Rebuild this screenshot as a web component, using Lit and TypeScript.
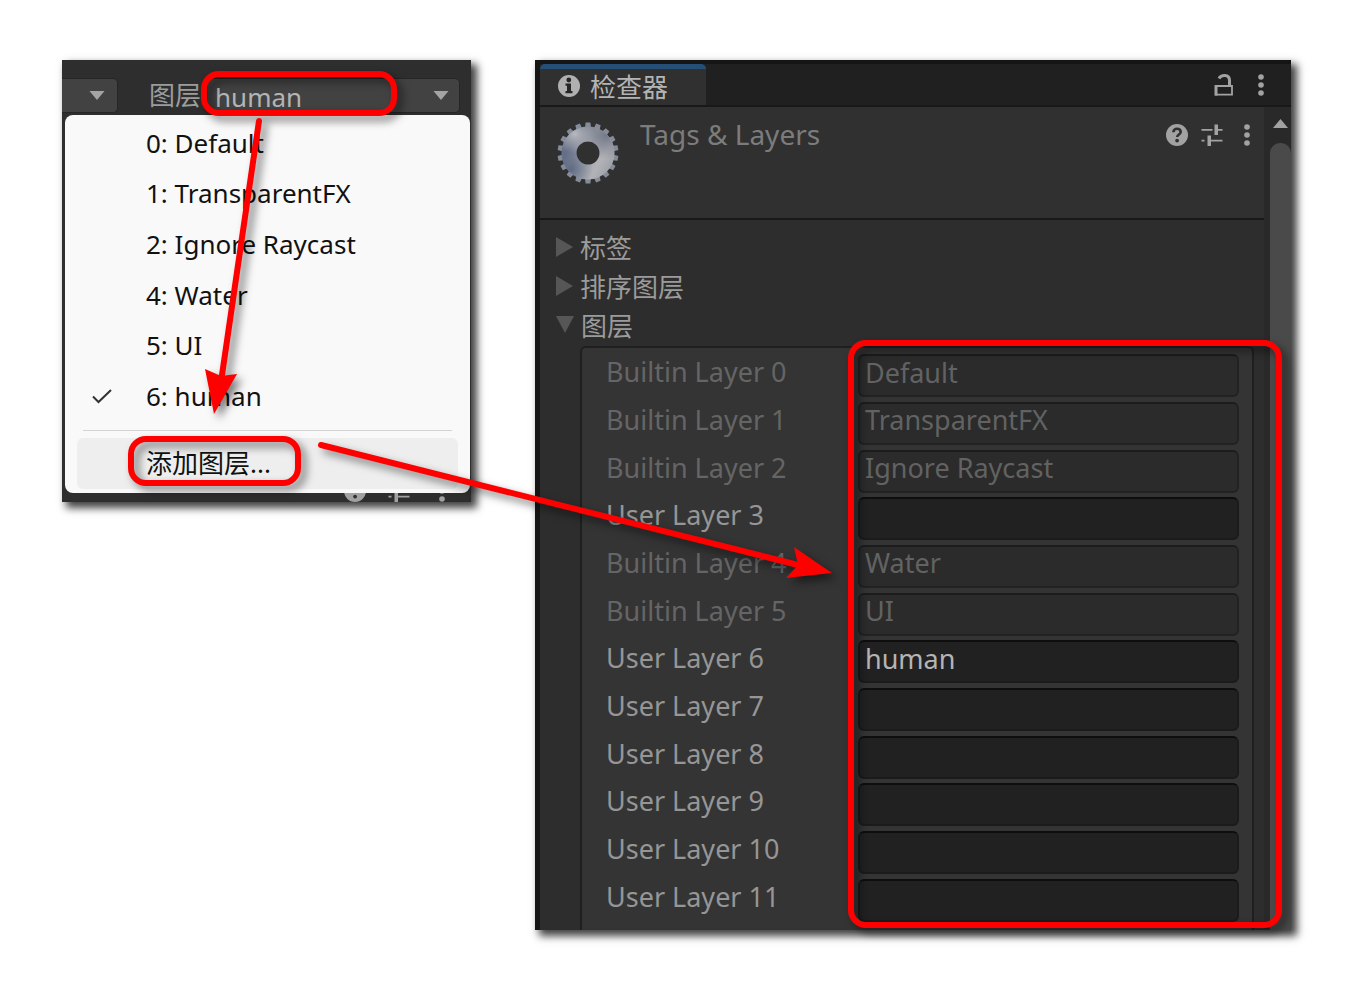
import { LitElement, html, css, svg } from "lit";
import { customElement } from "lit/decorators.js";

const MENU = ["0: Default", "1: TransparentFX", "2: Ignore Raycast", "4: Water", "5: UI", "6: human"];

const LAYERS = [
  { label: "Builtin Layer 0", value: "Default", builtin: true },
  { label: "Builtin Layer 1", value: "TransparentFX", builtin: true },
  { label: "Builtin Layer 2", value: "Ignore Raycast", builtin: true },
  { label: "User Layer 3", value: "", builtin: false },
  { label: "Builtin Layer 4", value: "Water", builtin: true },
  { label: "Builtin Layer 5", value: "UI", builtin: true },
  { label: "User Layer 6", value: "human", builtin: false },
  { label: "User Layer 7", value: "", builtin: false },
  { label: "User Layer 8", value: "", builtin: false },
  { label: "User Layer 9", value: "", builtin: false },
  { label: "User Layer 10", value: "", builtin: false },
  { label: "User Layer 11", value: "", builtin: false },
];

const helpIcon = html`<svg width="22" height="22" viewBox="0 0 22 22" aria-hidden="true">
  <circle cx="11" cy="11" r="11" fill="#a2a2a2" />
  <path d="M7.400 8.200C7.400 6 9 4.800 11 4.800S14.700 6 14.700 8c0 2.400-3.500 2.600-3.500 5" fill="none" stroke="#303030" stroke-width="2.600" />
  <circle cx="11.100" cy="16.600" r="1.900" fill="#303030" />
</svg>`;

const slidersIcon = html`<svg width="22" height="22" viewBox="0 0 22 22" aria-hidden="true" fill="#a2a2a2">
  <path d="M0.500 5h11v1.800h-11zM17 5h4.500v1.800H17zM13.500 0.500h3.500v10.500h-3.500zM0.500 15.700h3v1.800h-3zM10 15.700h11.500v1.800H10zM6.500 11.500H10v10.500H6.500z" />
</svg>`;

const dotsIcon = html`<svg width="6" height="22" viewBox="0 0 6 22" aria-hidden="true" fill="#a2a2a2">
  <circle cx="3" cy="3" r="2.800" /><circle cx="3" cy="11" r="2.800" /><circle cx="3" cy="19" r="2.800" />
</svg>`;

const lockIcon = html`<svg width="20" height="22" viewBox="0 0 20 22" aria-hidden="true" fill="none" stroke="#a2a2a2">
  <path d="M2 12h16v8.700H2z" stroke-width="1.800" />
  <path d="M2 11.100v10.500" stroke-width="3" />
  <path d="M5 4.500C7 0.800 15.500-0.200 15.500 6.500V12" stroke-width="3" />
</svg>`;

const infoIcon = html`<svg width="22" height="22" viewBox="0 0 22 22" aria-hidden="true">
  <circle cx="11" cy="11" r="11" fill="#b0b0b0" />
  <circle cx="10.800" cy="5" r="2.400" fill="#262626" />
  <path d="M7.500 8.500h5.500v7.500h1.500v2.200h-7V16h1.500v-5.300H7.500z" fill="#262626" />
</svg>`;

const gearIcon = html`<svg width="62" height="62" viewBox="-31 -31 62 62" aria-hidden="true">
  <defs>
    <linearGradient id="metal" gradientUnits="userSpaceOnUse" x1="-26" y1="-8" x2="24" y2="20">
      <stop offset="0" stop-color="#68728a" /><stop offset="0.140" stop-color="#667088" />
      <stop offset="0.420" stop-color="#a2a5ad" /><stop offset="0.720" stop-color="#b2b3b7" />
      <stop offset="1" stop-color="#9a9da6" />
    </linearGradient>
    <radialGradient id="dark-top" gradientUnits="userSpaceOnUse" cx="18" cy="-18" r="24">
      <stop offset="0" stop-color="#737988" /><stop offset="1" stop-color="#737988" stop-opacity="0" />
    </radialGradient>
    <radialGradient id="light-top" gradientUnits="userSpaceOnUse" cx="-13" cy="-19" r="20">
      <stop offset="0" stop-color="#b8b9bd" /><stop offset="1" stop-color="#b8b9bd" stop-opacity="0" />
    </radialGradient>
    <radialGradient id="dark-low" gradientUnits="userSpaceOnUse" cx="-17" cy="16" r="22">
      <stop offset="0" stop-color="#606b84" /><stop offset="1" stop-color="#606b84" stop-opacity="0" />
    </radialGradient>
  </defs>
  ${Array.from({ length: 18 }, (_, i) => svg`<path d="M-3 -25L-2.400 -30.400H2.400L3 -25z" fill="#858b99" transform="rotate(${i * 20})" />`)}
  ${["metal", "dark-top", "light-top", "dark-low"].map(
    (paint) => svg`<circle r="19" fill="none" stroke="url(#${paint})" stroke-width="15" />`
  )}
</svg>`;

@customElement("app-root")
export class AppRoot extends LitElement {
  static styles = css`
    :host {
      display: block;
      background: #fff;
      font-family: "Noto Sans", "Noto Sans CJK SC", sans-serif;
      font-size: 26px;
    }
    * { box-sizing: border-box; }
    svg { display: block; }
    button, input, select { font: inherit; color: inherit; margin: 0; }
    button { border: 0; padding: 0; background: none; }
    .board {
      display: flex;
      align-items: flex-start;
      gap: 64px;
      min-height: 100vh;
      padding: 60px 66px 58px 62px;
    }
    .panel { box-shadow: 5px 5px 8px 1px rgba(0, 0, 0, 0.75); }

    .picker { position: relative; flex: 0 1 409px; min-width: 0; background: #2e2e2e; }
    .bar { display: flex; align-items: center; height: 55px; padding: 16px 11px 0 0; color: #9c9c9c; }
    .stub {
      width: 56px;
      height: 35px;
      padding-right: 12px;
      display: flex;
      align-items: center;
      justify-content: flex-end;
      background: #424242;
      border: 1px solid #262626;
      border-left: 0;
      border-radius: 0 5px 5px 0;
    }
    .layer-label { margin: 0 6px 0 31px; line-height: 35px; white-space: nowrap; }
    .drop { position: relative; flex: 1; min-width: 0; }
    .drop select {
      display: block;
      appearance: none;
      width: 100%;
      height: 35px;
      padding: 0 0 2px 7px;
      background: #424242;
      border: 1px solid #262626;
      border-radius: 5px;
      color: #b4b4b4;
      outline: 0;
    }
    .caret { position: absolute; right: 11px; top: 13px; pointer-events: none; }
    .ring {
      position: absolute;
      border: 6px solid #f00;
      border-radius: 18px;
      filter: drop-shadow(5px 5px 4px rgba(0, 0, 0, 0.5));
      pointer-events: none;
    }
    .ring-select { left: -6px; top: -7px; width: 196px; height: 45px; }
    .menu {
      margin: 0 1px 0 3px;
      padding: 4px 12px;
      border-radius: 8px;
      background: #f9f9f9;
      color: #111;
    }
    .choices { display: grid; grid-auto-rows: 1fr; height: 304px; }
    .choice { display: grid; grid-template-columns: 69px 1fr; align-items: center; width: 100%; padding-bottom: 3px; text-align: left; white-space: nowrap; }
    .tick { padding-left: 14px; }
    .rule { margin: 7px 6px; border: 0; border-top: 1px solid #d4d4d4; }
    .add { position: relative; height: 51px; border-radius: 6px; background: #eee; }
    .ring-add { left: 51px; top: -2px; width: 173px; height: 50px; }
    .strip { display: flex; justify-content: flex-end; align-items: flex-end; height: 9px; padding-right: 26px; overflow: hidden; }
    .strip svg { margin-left: 22px; }
    .strip svg:last-child { margin-left: 29px; }

    .inspector { flex: 1; min-width: 0; align-self: stretch; display: flex; flex-direction: column; background: #151515; padding: 4px 0 0 5px; color: #a0a0a0; }
    .tabs { display: flex; align-items: center; justify-content: space-between; height: 43px; padding-right: 27px; background: #202020; border-bottom: 2px solid #191919; }
    .tab { display: flex; align-items: center; gap: 10px; align-self: stretch; width: 166px; padding: 0 0 2px 18px; border-top: 5px solid #264f78; border-radius: 5px 5px 0 0; background: #303030; color: #b4b4b4; white-space: nowrap; }
    .tools { display: flex; align-items: center; gap: 24px; }
    .body { flex: 1; display: flex; min-height: 0; }
    .content { flex: 1; min-width: 0; display: flex; flex-direction: column; background: #2d2d2d; }
    .head { display: flex; height: 113px; padding: 15px 14px 0 17px; background: #303030; border-bottom: 2px solid #181818; }
    .title { flex: 1; margin: 0 0 0 21px; font-size: 28px; font-weight: 400; line-height: 24px; color: #7c7c7c; white-space: nowrap; }
    .head .tools { gap: 13px; align-items: flex-start; padding-top: 2px; }
    .head .tools .more { margin-left: 8px; }
    .folds { display: flex; flex-direction: column; padding: 8px 0 0 16px; color: #9b9b9b; }
    .fold { display: flex; align-items: center; gap: 7px; height: 39px; padding-bottom: 2px; text-align: left; }
    .list { position: relative; flex: 1; display: grid; grid-auto-rows: 1fr; margin: 1px 10px 0 40px; padding: 4px 13px 6px 24px; background: #343434; border: solid #1f1f1f; border-width: 2px 2px 0; border-radius: 6px 6px 0 0; }
    .row { display: grid; grid-template-columns: minmax(0, 252px) minmax(0, 1fr); align-items: center; font-size: 27px; }
    .row label { padding-bottom: 7px; line-height: 36px; white-space: nowrap; color: #969696; }
    .row input { width: 100%; height: 43px; padding: 0 5px 7px; border: 2px solid #1b1b1b; border-top-color: #0e0e0e; border-radius: 6px; background: #212121; color: #b4b4b4; outline: 0; }
    .row.builtin label { color: #656565; }
    .row.builtin input { background: #2b2b2b; border-color: #222; border-top-color: #1c1c1c; color: #626262; }
    .ring-list { left: 266px; right: -30px; top: -8px; bottom: 2px; }
    .scroll { display: flex; flex-direction: column; align-items: center; width: 27px; padding: 12px 0 0 5px; background: #292929; }
    .thumb { flex: 1; width: 21px; margin-top: 15px; border-radius: 10px 10px 0 0; background: #4a4a4a; }
    .arrows { position: absolute; left: 0; top: 0; overflow: visible; pointer-events: none; filter: drop-shadow(5px 5px 4px rgba(0, 0, 0, 0.5)); z-index: 2; }
  `;

  render() {
    const caret = html`<svg width="16" height="9" viewBox="0 0 16 9" aria-hidden="true"><path d="M0.500 0h15L8 9z" fill="#a4a4a4" /></svg>`;
    const right = html`<svg width="17" height="20" viewBox="0 0 17 20" aria-hidden="true"><path d="M0 0l17 10L0 20z" fill="#565656" /></svg>`;
    const down = html`<svg width="18" height="17" viewBox="0 0 18 17" aria-hidden="true"><path d="M0 0h18L9 17z" fill="#565656" /></svg>`;
    return html`
      <main class="board">
        <section class="panel picker">
          <div class="bar">
            <button class="stub" aria-label="Tag">${caret}</button>
            <label class="layer-label" for="layer">图层</label>
            <div class="drop">
              <select id="layer"><option>human</option></select>
              <span class="caret">${caret}</span>
              <span class="ring ring-select"></span>
            </div>
          </div>
          <div class="menu" role="menu">
            <div class="choices">
              ${MENU.map((item, i) => html`<button class="choice" role="menuitemradio" aria-checked=${i === 5}>
                <span class="tick">${i === 5
                  ? html`<svg width="22" height="16" viewBox="0 0 22 16" aria-hidden="true"><path d="M2 8.500l5.500 5.500L20 2" fill="none" stroke="#333" stroke-width="2" /></svg>`
                  : null}</span>
                <span>${item}</span>
              </button>`)}
            </div>
            <hr class="rule" />
            <button class="choice add" role="menuitem">
              <span></span><span>添加图层...</span><span class="ring ring-add"></span>
            </button>
          </div>
          <div class="strip">${helpIcon}${slidersIcon}${dotsIcon}</div>
          <svg class="arrows" width="409" height="442" viewBox="62 60 409 442" aria-hidden="true" fill="#f00" stroke="#f00">
            <path d="M259 121L221 382M321 445L806 567" stroke-width="6" stroke-linecap="round" />
            <path d="M214 414L205 369L221 376L237 374zM832 573L786 578L798 565L794 547z" stroke="none" />
          </svg>
        </section>

        <section class="panel inspector">
          <div class="tabs">
            <button class="tab">${infoIcon}<span>检查器</span></button>
            <div class="tools">
              <button aria-label="Lock">${lockIcon}</button>
              <button aria-label="More">${dotsIcon}</button>
            </div>
          </div>
          <div class="body">
            <div class="content">
              <header class="head">
                ${gearIcon}
                <h1 class="title">Tags &amp; Layers</h1>
                <div class="tools">
                  <button aria-label="Help">${helpIcon}</button>
                  <button aria-label="Presets">${slidersIcon}</button>
                  <button class="more" aria-label="More">${dotsIcon}</button>
                </div>
              </header>
              <div class="folds">
                <button class="fold" aria-expanded="false">${right}<span>标签</span></button>
                <button class="fold" aria-expanded="false">${right}<span>排序图层</span></button>
                <button class="fold" aria-expanded="true">${down}<span>图层</span></button>
              </div>
              <div class="list">
                ${LAYERS.map((layer, i) => html`<div class="row ${layer.builtin ? "builtin" : ""}">
                  <label for="layer-${i}">${layer.label}</label>
                  <input id="layer-${i}" type="text" .value=${layer.value} ?disabled=${layer.builtin} />
                </div>`)}
                <span class="ring ring-list"></span>
              </div>
            </div>
            <div class="scroll">
              <svg width="15" height="9" viewBox="0 0 15 9" aria-hidden="true"><path d="M0 9L7.500 0L15 9z" fill="#a2a2a2" /></svg>
              <div class="thumb"></div>
            </div>
          </div>
        </section>
      </main>
    `;
  }
}
